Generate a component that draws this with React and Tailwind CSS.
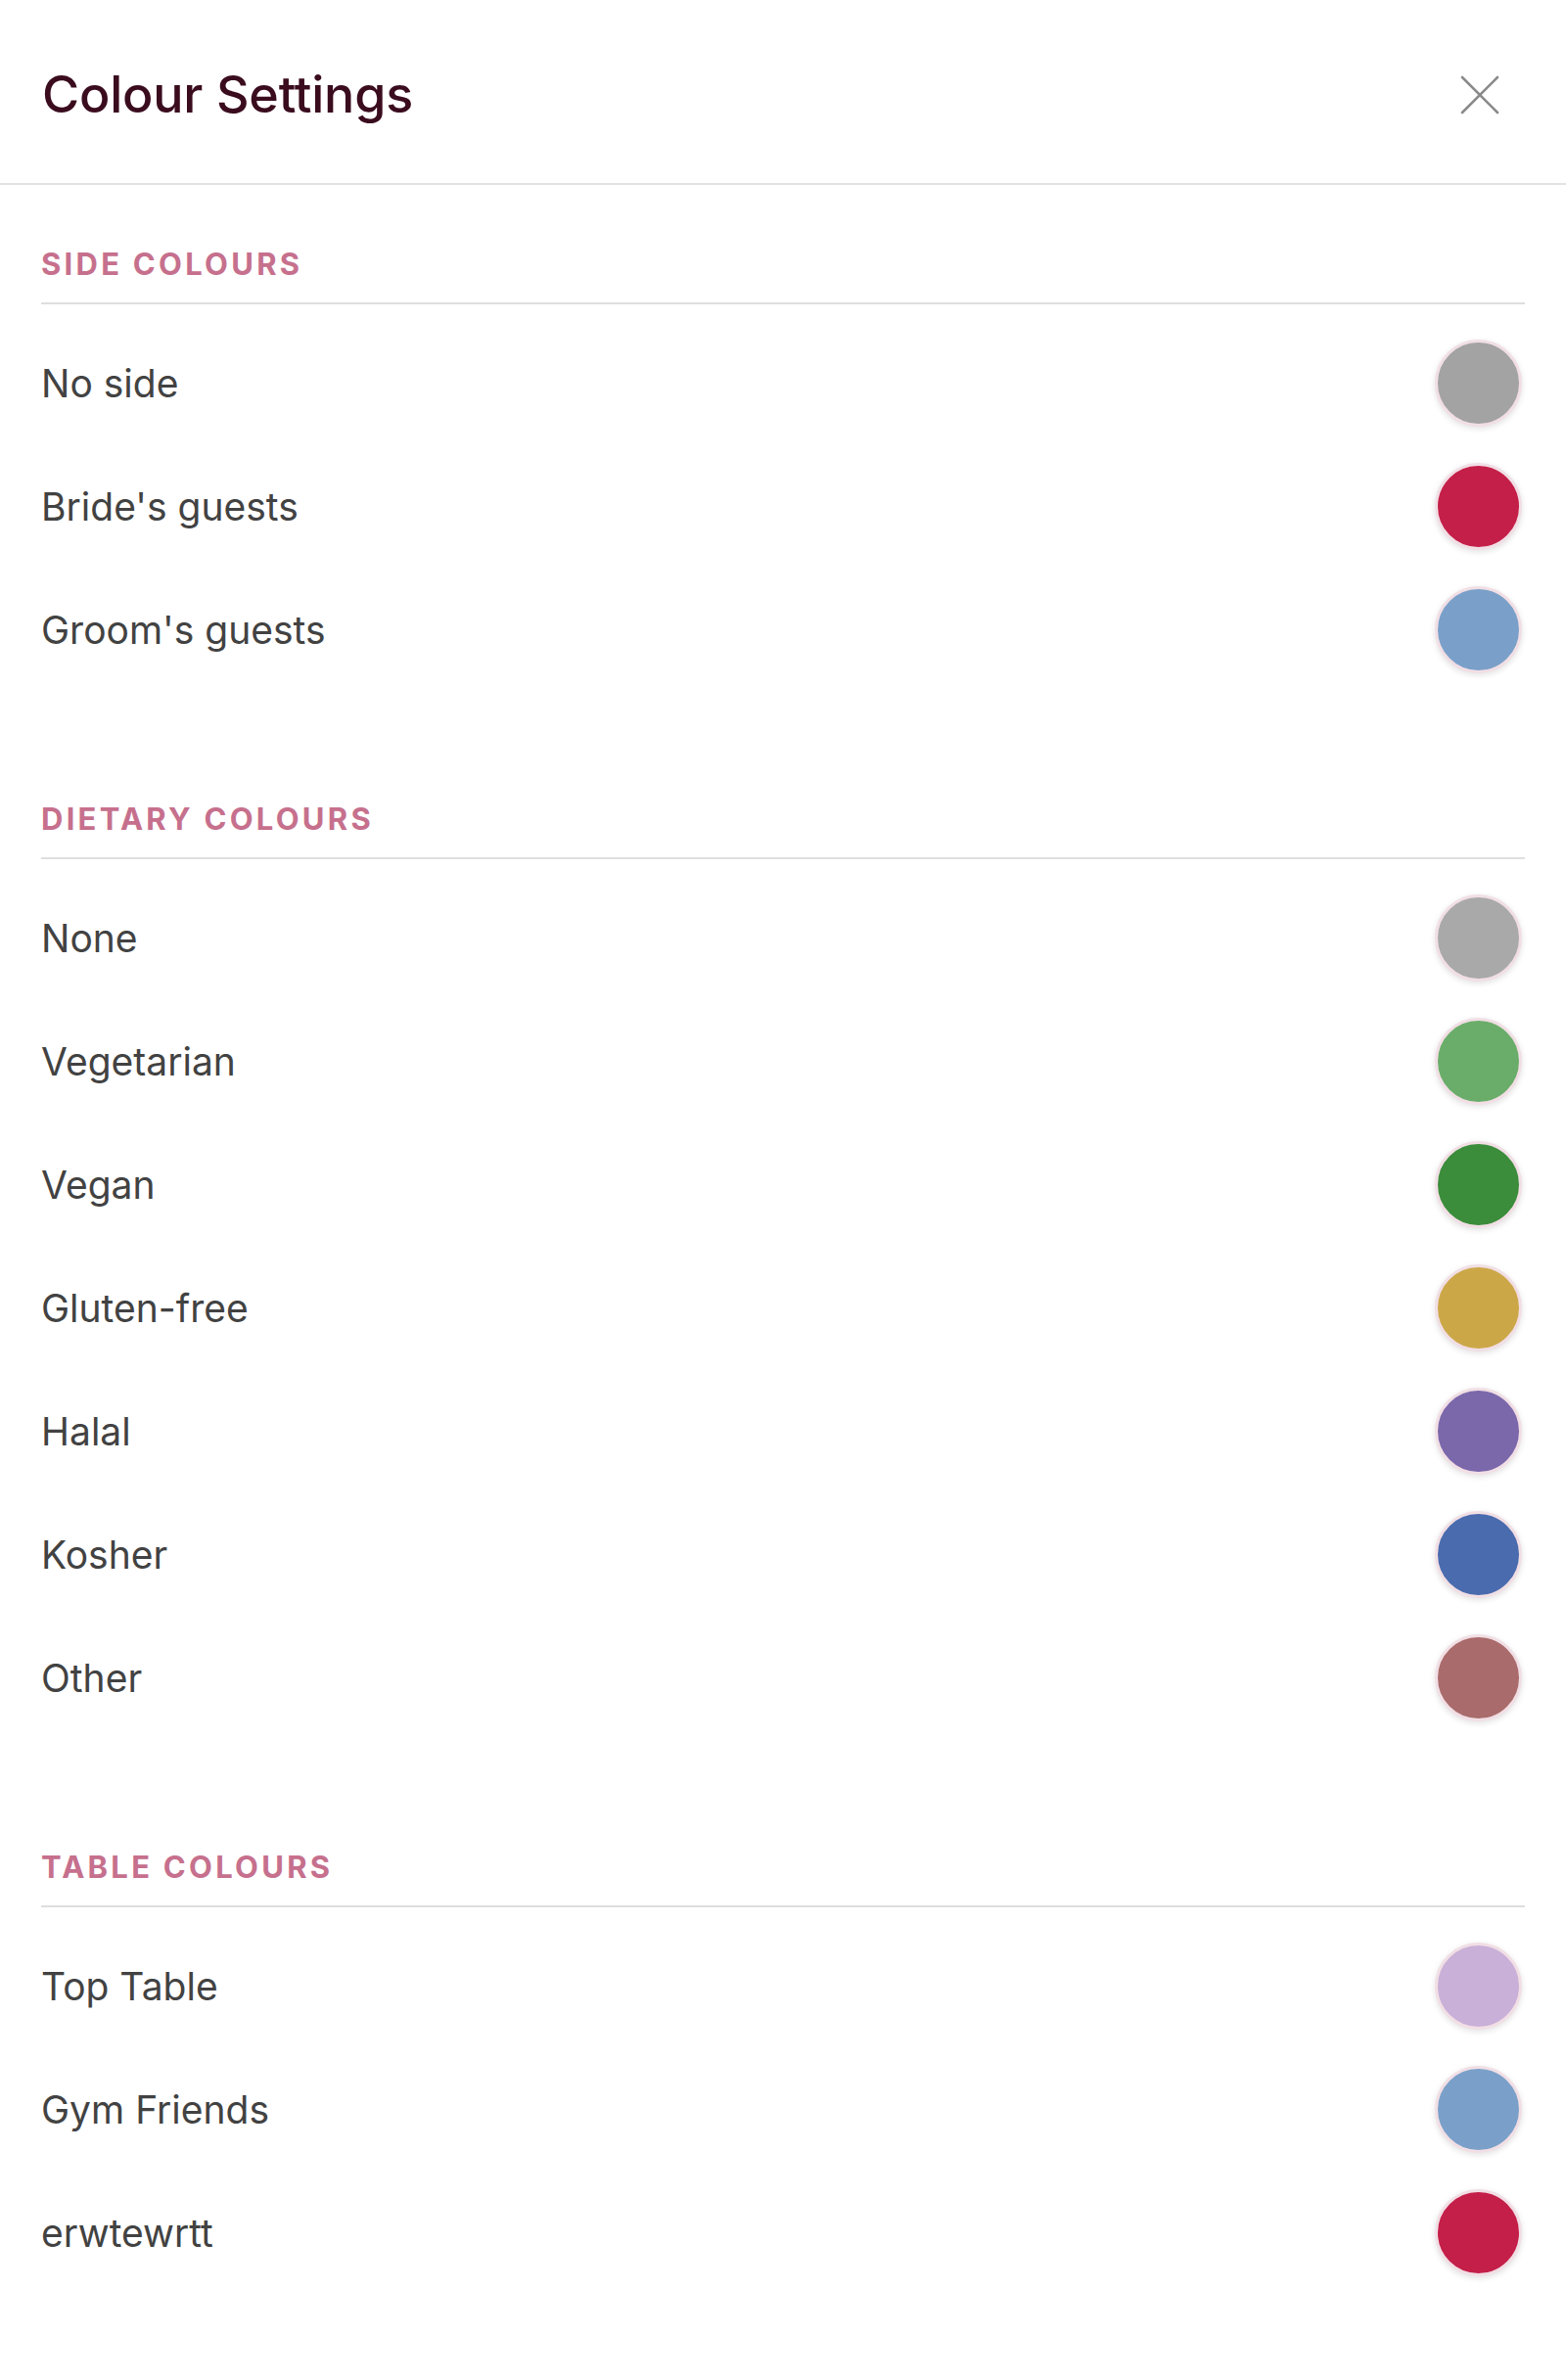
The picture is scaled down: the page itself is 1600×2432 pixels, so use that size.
import React from "react";

const sections = [
  {
    title: "SIDE COLOURS",
    rows: [
      ["No side", "#a3a3a3"],
      ["Bride's guests", "#c41f49"],
      ["Groom's guests", "#7aa0c9"],
    ],
  },
  {
    title: "DIETARY COLOURS",
    rows: [
      ["None", "#a9a9a9"],
      ["Vegetarian", "#6aad6a"],
      ["Vegan", "#3b8c3b"],
      ["Gluten-free", "#cca748"],
      ["Halal", "#7b68ab"],
      ["Kosher", "#4a6bad"],
      ["Other", "#a96b6b"],
    ],
  },
  {
    title: "TABLE COLOURS",
    rows: [
      ["Top Table", "#c9b0d8"],
      ["Gym Friends", "#7aa0c9"],
      ["erwtewrtt", "#c41f49"],
    ],
  },
];

export default function App() {
  return (
    <div
      className="w-[1600px] min-h-[2432px] bg-white"
      style={{ fontFamily: "Inter, 'Noto Sans', sans-serif" }}
    >
      <header className="h-[189px] flex items-center justify-between pl-[43px] pr-[68px] pt-[6px] border-b-2 border-[#e2e2e2]">
        <h1 className="text-[52px] leading-none font-medium text-[#3a0c1e] tracking-[-0.2px]">
          Colour Settings
        </h1>
        <svg width="40" height="40" viewBox="0 0 40 40" className="shrink-0">
          <path d="M2 2 L38 38 M38 2 L2 38" stroke="#8a8a8a" strokeWidth="2.6" strokeLinecap="round" />
        </svg>
      </header>
      <main className="pt-[63px] px-[42px] flex flex-col gap-[113px]">
        {sections.map((s) => (
          <section key={s.title}>
            <div className="text-[31px] leading-[36px] font-bold tracking-[0.105em] text-[#c6708d] pb-[21px] border-b-2 border-[#dedede]">
              {s.title}
            </div>
            <div className="pt-[17px] flex flex-col">
              {s.rows.map(([label, color]) => (
                <div key={label} className="h-[126px] flex items-center justify-between">
                  <span className="text-[39px] leading-none text-[#424242]">{label}</span>
                  <div
                    className="w-[89px] h-[89px] rounded-full border-[3px] border-[#f1dfe5] shadow-[0_2px_6px_rgba(0,0,0,0.12)] mr-[3px]"
                    style={{ backgroundColor: color }}
                  />
                </div>
              ))}
            </div>
          </section>
        ))}
      </main>
    </div>
  );
}
